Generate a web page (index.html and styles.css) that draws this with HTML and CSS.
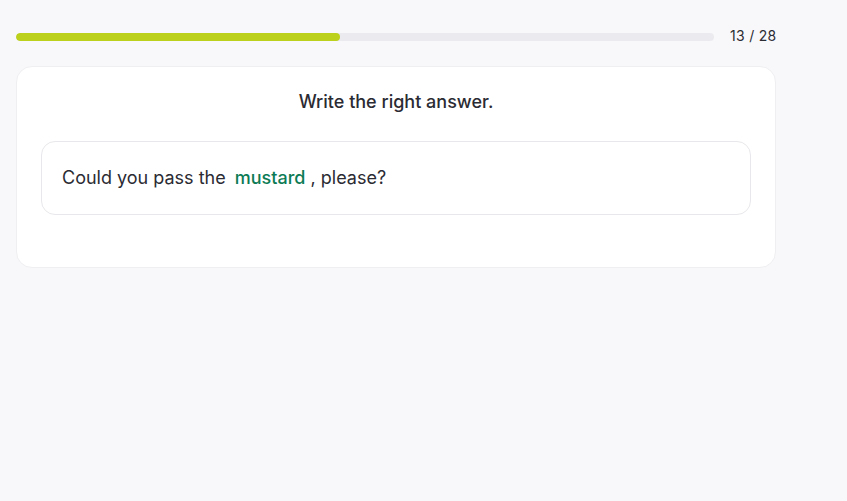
FILE: index.html
```html
<!DOCTYPE html>
<html lang="en">
<head>
<meta charset="utf-8">
<link rel="stylesheet" href="styles.css">
</head>
<body>
<div class="page">
  <div class="top">
    <div class="bar"><div class="fill" style="width: 46.43%"></div></div>
    <div class="count">13 / 28</div>
  </div>
  <div class="card">
    <div class="title">Write the right answer.</div>
    <div class="box">
      <span>Could you pass the </span><span class="answer">mustard</span><span> , please?</span>
    </div>
  </div>
</div>
</body>
</html>
```
FILE: styles.css
```css
html, body {
  margin: 0;
  padding: 0;
  background: #f8f8fa;
  font-family: Inter, "Noto Sans", sans-serif;
  color: #2b2b33;
}
.page {
  width: 760px;
  padding: 24px 16px;
}
.top {
  display: flex;
  align-items: center;
  gap: 16px;
  height: 26px;
}
.bar {
  flex: 1;
  height: 8px;
  border-radius: 4px;
  background: #ebebef;
  overflow: hidden;
}
.fill {
  height: 100%;
  background: #bcd11b;
  border-radius: 4px;
}
.count {
  font-size: 14px;
  letter-spacing: 0.3px;
  white-space: nowrap;
  width: 46px;
  text-align: right;
  color: #2b2b33;
  margin-bottom: 3px;
}
.card {
  margin-top: 16px;
  background: #fff;
  border: 1px solid #efeff2;
  border-radius: 16px;
  padding: 23px 24px 52px;
}
.title {
  text-align: center;
  font-size: 18px;
  font-weight: 500;
  line-height: 24px;
  margin-bottom: 27px;
}
.box {
  border: 1px solid #e8e8ec;
  border-radius: 14px;
  padding: 24px 20px;
  font-size: 18px;
  line-height: 24px;
}
.answer {
  color: #0c7b55;
  font-weight: 500;
  padding: 0 0 0 4px;
}
```
